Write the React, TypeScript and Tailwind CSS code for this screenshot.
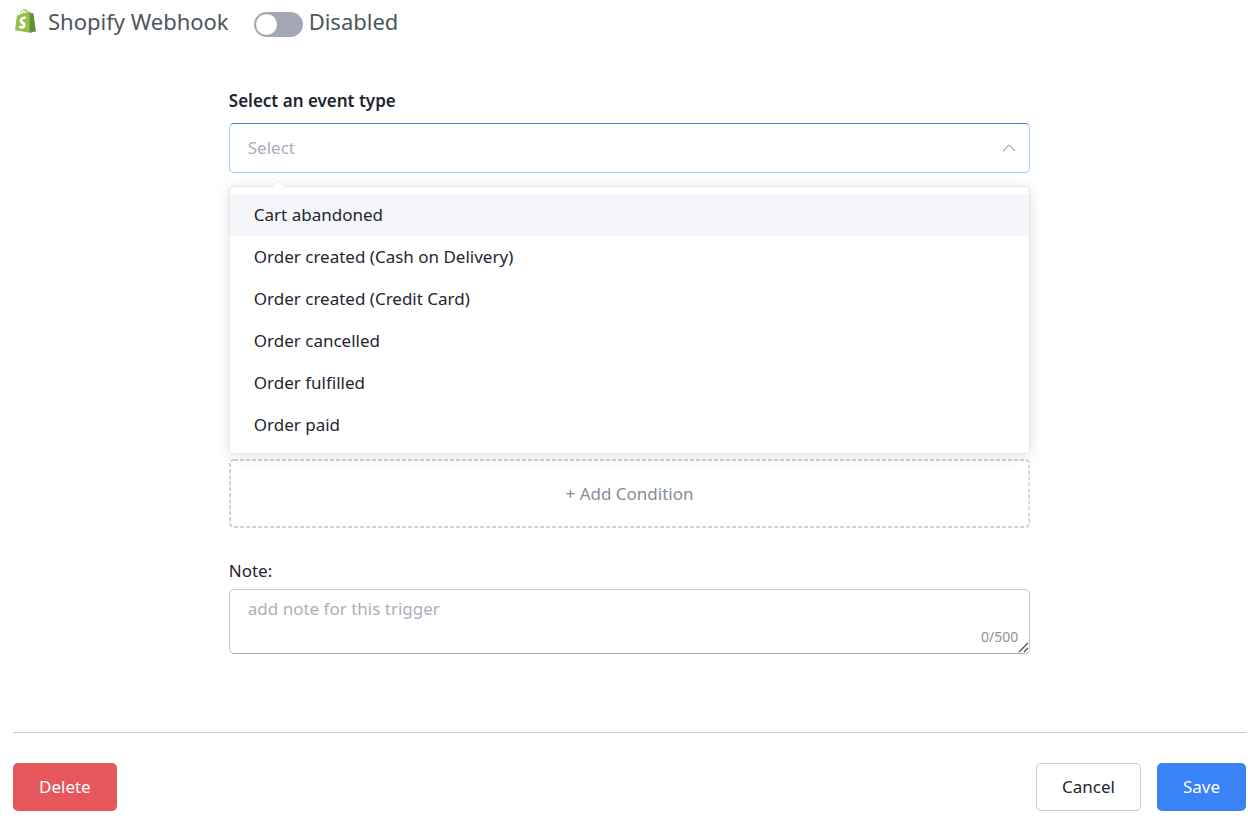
import { useState } from "react";

const EVENTS = [
  "Cart abandoned",
  "Order created (Cash on Delivery)",
  "Order created (Credit Card)",
  "Order cancelled",
  "Order fulfilled",
  "Order paid",
];

function ShopifyLogo() {
  return (
    <svg viewBox="0 0 110 125" className="h-6 w-[21px]" aria-hidden="true">
      <path
        fill="#95BF47"
        fillRule="evenodd"
        d="M95.9,23.9c-0.1-0.6-0.6-1-1.1-1c-0.5,0-9.3-0.2-9.3-0.2s-7.4-7.2-8.1-7.9c-0.7-0.7-2.2-0.5-2.7-0.3c0,0-1.4,0.4-3.7,1.1c-0.4-1.3-1-2.8-1.8-4.4c-2.6-5-6.5-7.7-11.1-7.7c-0.3,0-0.6,0-1,0.1c-0.1-0.2-0.3-0.3-0.4-0.5c-2-2.2-4.6-3.2-7.7-3.1c-6,0.2-12,4.5-16.8,12.2c-3.4,5.4-6,12.2-6.7,17.5c-6.9,2.1-11.7,3.6-11.8,3.7c-3.5,1.1-3.6,1.2-4,4.5c-0.3,2.5-9.5,73-9.5,73l76.4,13.2l33.1-8.2C109.5,115.8,96,24.5,95.9,23.9z M67.2,16.8c-1.8,0.5-3.8,1.2-5.9,1.8c0-3-0.4-7.3-1.8-10.9C64,8.6,66.2,13.7,67.2,16.8z M57.2,19.9c-4,1.2-8.4,2.6-12.8,3.9c1.2-4.7,3.6-9.4,6.4-12.5c1.1-1.1,2.6-2.4,4.3-3.2C56.9,11.6,57.3,16.5,57.2,19.9z M49.1,4c1.4,0,2.6,0.3,3.6,0.9c-1.6,0.8-3.2,2.1-4.7,3.6c-3.8,4.1-6.7,10.5-7.9,16.6c-3.6,1.1-7.2,2.2-10.5,3.2C31.7,18.8,39.8,4.3,49.1,4z"
      />
      <path
        fill="#5E8E3E"
        d="M94.8,22.9c-0.5,0-9.3-0.2-9.3-0.2s-7.4-7.2-8.1-7.9c-0.3-0.3-0.6-0.4-1-0.5l0,109.7l33.1-8.2c0,0-13.5-91.3-13.6-92C95.8,23.3,95.3,22.9,94.8,22.9z"
      />
      <path
        fill="#FFFFFF"
        d="M58,39.9l-3.8,14.4c0,0-4.3-2-9.4-1.6c-7.5,0.5-7.5,5.2-7.5,6.4c0.4,6.4,17.3,7.8,18.3,22.9c0.7,11.9-6.3,20-16.4,20.6c-12.2,0.8-18.9-6.4-18.9-6.4l2.6-11c0,0,6.7,5.1,12.1,4.7c3.5-0.2,4.8-3.1,4.7-5.1c-0.5-8.4-14.3-7.9-15.2-21.7c-0.7-11.6,6.9-23.4,23.7-24.4C54.7,38.2,58,39.9,58,39.9z"
      />
    </svg>
  );
}

export default function App() {
  const [enabled, setEnabled] = useState(false);
  const [open, setOpen] = useState(true);
  const [event, setEvent] = useState("");
  const [active, setActive] = useState(0);
  const [note, setNote] = useState("");

  return (
    <div className="bg-white pt-[7px] pr-0.5 pb-2 pl-[13px] font-['Noto_Sans','Open_Sans',sans-serif] text-[17px] text-[#1f2530]">
      <header className="flex h-7 items-center text-[22px] leading-7 text-[#4d565c]">
        <div className="flex w-6 justify-center">
          <ShopifyLogo />
        </div>
        <h1 className="ml-[11px]">Shopify Webhook</h1>
        <label className="ml-[25px] flex cursor-pointer items-center gap-1.5">
          <input
            type="checkbox"
            role="switch"
            checked={enabled}
            onChange={(e) => setEnabled(e.target.checked)}
            className="peer sr-only"
          />
          <span className="mt-1.5 flex h-[25px] w-[49px] items-center rounded-full bg-[#a2a8b5] px-0.5 peer-checked:justify-end peer-checked:bg-[#3a83f7]">
            <span className="size-[21px] rounded-full bg-white" />
          </span>
          <span>{enabled ? "Enabled" : "Disabled"}</span>
        </label>
      </header>

      <main className="mx-auto mt-[54px] w-[65%]">
        <label htmlFor="event-type" className="block leading-6 font-semibold">
          Select an event type
        </label>
        <div className="relative mt-2.5 h-[336px]">
          <select
            id="event-type"
            value={event}
            onChange={(e) => setEvent(e.target.value)}
            onMouseDown={(e) => {
              e.preventDefault();
              setOpen(!open);
            }}
            className={`block h-[50px] w-full appearance-none rounded-[5px] border border-[#a3c7fb] border-t-[#4285e0] bg-white px-[18px] outline-none ${
              event ? "text-[#1f2530]" : "text-[#a9afbc]"
            }`}
          >
            <option value="">Select</option>
            {EVENTS.map((name) => (
              <option key={name}>{name}</option>
            ))}
          </select>
          <svg
            viewBox="0 0 14 8"
            className="pointer-events-none absolute top-[21px] right-3.5 h-2 w-3.5"
            fill="none"
            stroke="#a9aebb"
            strokeWidth="1.2"
            aria-hidden="true"
          >
            <path d="M1 7L7 1L13 7" />
          </svg>
          {open && (
            <div className="absolute inset-x-0 top-[63px] z-10 rounded-[5px] border border-[#e6e8ee] bg-white py-[7px] shadow-[0_2px_14px_rgba(0,0,0,0.12)]">
              <svg viewBox="0 0 14 8" className="absolute -top-[7px] left-[42px] h-2 w-3.5" aria-hidden="true">
                <path d="M0 8L7 1L14 8Z" fill="#ffffff" />
                <path d="M0 7.5L7 1L14 7.5" fill="none" stroke="#e6e8ee" />
              </svg>
              <ul>
                {EVENTS.map((name, i) => (
                  <li key={name}>
                    <button
                      type="button"
                      onMouseEnter={() => setActive(i)}
                      onClick={() => {
                        setEvent(name);
                        setOpen(false);
                      }}
                      className={`block h-[42px] w-full px-6 text-left ${i === active ? "bg-[#f5f6fa]" : ""}`}
                    >
                      {name}
                    </button>
                  </li>
                ))}
              </ul>
            </div>
          )}
        </div>

        <button type="button" className="relative block h-[69px] w-full text-[#858c9b]">
          <svg className="absolute inset-0 size-full" aria-hidden="true">
            <rect
              x="1"
              y="1"
              rx="4"
              className="h-[calc(100%-2px)] w-[calc(100%-2px)]"
              fill="none"
              stroke="#d0d2d9"
              strokeWidth="2"
              strokeDasharray="4 2"
            />
          </svg>
          + Add Condition
        </button>

        <label htmlFor="note" className="mt-[31px] block leading-6">
          Note:
        </label>
        <div className="relative mt-1.5">
          <textarea
            id="note"
            maxLength={500}
            value={note}
            onChange={(e) => setNote(e.target.value)}
            placeholder="add note for this trigger"
            className="block h-[65px] w-full resize-none rounded-[5px] border border-[#c6c9d2] border-b-[#a5a9b4] px-[18px] py-[7px] leading-6 outline-none placeholder:text-[#a9afbc]"
          />
          <span className="absolute right-3 bottom-[7px] text-sm leading-5 text-[#8f9297]">{note.length}/500</span>
          <svg
            viewBox="0 0 11 11"
            className="pointer-events-none absolute right-px bottom-px size-[11px]"
            stroke="#4a4a4a"
            strokeWidth="1.1"
            aria-hidden="true"
          >
            <path d="M1 10L10 1M6 10L10 6" />
          </svg>
        </div>
      </main>

      <footer className="mt-[78px] flex items-center border-t border-[#c8cbd2] pt-[30px]">
        <button type="button" className="h-12 rounded-[5px] bg-[#e5575b] px-[26px] text-white">
          Delete
        </button>
        <button type="button" className="ml-auto h-12 rounded-[5px] border border-[#c6c9d2] bg-white px-[25px]">
          Cancel
        </button>
        <button type="button" className="ml-4 h-12 rounded-[5px] bg-[#3a83f7] px-[26px] text-white">
          Save
        </button>
      </footer>
    </div>
  );
}
